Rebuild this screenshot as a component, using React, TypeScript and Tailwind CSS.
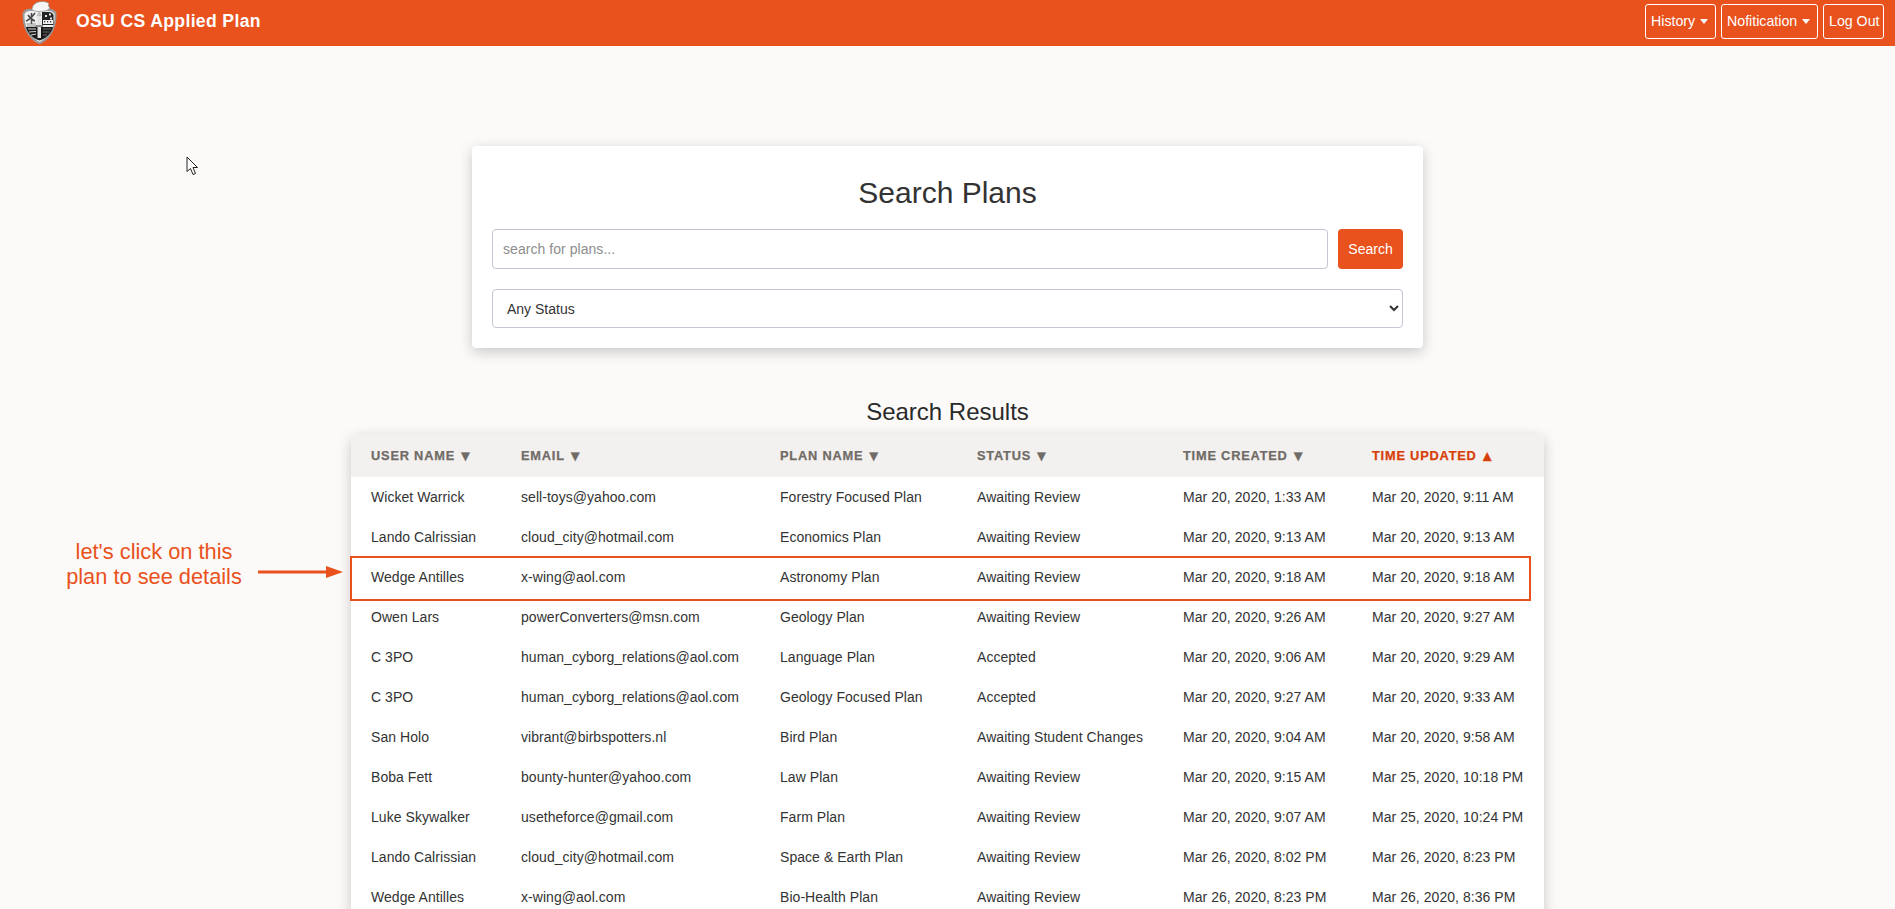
const rows = [
  ["Wicket Warrick", "sell-toys@yahoo.com", "Forestry Focused Plan", "Awaiting Review", "Mar 20, 2020, 1:33 AM", "Mar 20, 2020, 9:11 AM"],
  ["Lando Calrissian", "cloud_city@hotmail.com", "Economics Plan", "Awaiting Review", "Mar 20, 2020, 9:13 AM", "Mar 20, 2020, 9:13 AM"],
  ["Wedge Antilles", "x-wing@aol.com", "Astronomy Plan", "Awaiting Review", "Mar 20, 2020, 9:18 AM", "Mar 20, 2020, 9:18 AM"],
  ["Owen Lars", "powerConverters@msn.com", "Geology Plan", "Awaiting Review", "Mar 20, 2020, 9:26 AM", "Mar 20, 2020, 9:27 AM"],
  ["C 3PO", "human_cyborg_relations@aol.com", "Language Plan", "Accepted", "Mar 20, 2020, 9:06 AM", "Mar 20, 2020, 9:29 AM"],
  ["C 3PO", "human_cyborg_relations@aol.com", "Geology Focused Plan", "Accepted", "Mar 20, 2020, 9:27 AM", "Mar 20, 2020, 9:33 AM"],
  ["San Holo", "vibrant@birbspotters.nl", "Bird Plan", "Awaiting Student Changes", "Mar 20, 2020, 9:04 AM", "Mar 20, 2020, 9:58 AM"],
  ["Boba Fett", "bounty-hunter@yahoo.com", "Law Plan", "Awaiting Review", "Mar 20, 2020, 9:15 AM", "Mar 25, 2020, 10:18 PM"],
  ["Luke Skywalker", "usetheforce@gmail.com", "Farm Plan", "Awaiting Review", "Mar 20, 2020, 9:07 AM", "Mar 25, 2020, 10:24 PM"],
  ["Lando Calrissian", "cloud_city@hotmail.com", "Space & Earth Plan", "Awaiting Review", "Mar 26, 2020, 8:02 PM", "Mar 26, 2020, 8:23 PM"],
  ["Wedge Antilles", "x-wing@aol.com", "Bio-Health Plan", "Awaiting Review", "Mar 26, 2020, 8:23 PM", "Mar 26, 2020, 8:36 PM"],
];
const heads = ["User Name", "Email", "Plan Name", "Status", "Time Created"];

function Crest() {
  return (
    <svg width="35" height="44" viewBox="0 0 35 44" className="shrink-0">
      <path d="M0.5 12 C2 9 5 7 9 8 L17.5 6 L26 8 C30 7 33 9 34.5 12 C35 24 31 37 17.5 43.5 C4 37 0 24 0.5 12 Z" fill="#9a9a9a" />
      <path d="M2.5 13 C4 10.5 6 9.5 9 10 L17.5 8.5 L26 10 C29 9.5 31 10.5 32.5 13 C33 24 29 35 17.5 41 C6 35 2 24 2.5 13 Z" fill="#f0f0f0" />
      <path d="M20 11 L26 11 C29 10.5 31 12 31.5 14 L31.5 24 L20 24 Z" fill="#222" />
      <path d="M4 26 H31 C29.5 32 25 37 17.5 39.5 C10 37 5.5 32 4 26 Z" fill="#191919" />
      <path d="M4 20 C7 19 10 16 13 12 M6 14 C8 17 10 19 13 20 M9.5 12 L9.5 23" stroke="#4a4a4a" strokeWidth="1.5" fill="none" />
      <path d="M4.5 23 H14 M5 25 H14" stroke="#7a7a7a" strokeWidth="0.8" />
      <path d="M6 28 L14 28 M7 31 L14 30.5 M9 34 L14 33" stroke="#d8d8d8" strokeWidth="1" />
      <path d="M21 28 H29 M21 31 H27.5 M21 34 H25" stroke="#6a6a6a" strokeWidth="1" />
      <rect x="15.5" y="12" width="3.5" height="25" fill="#e2e2e2" />
      <path d="M14.5 15 L17.2 10 L20 15 Z" fill="#bdbdbd" />
      <rect x="13.5" y="24" width="7.5" height="2" fill="#8a8a8a" />
      <rect x="21" y="19" width="10" height="4" fill="#f2f2f2" />
      <rect x="22" y="20" width="1.2" height="1.4" fill="#333" />
      <rect x="25" y="20" width="1.2" height="1.4" fill="#333" />
      <rect x="28" y="20" width="1.2" height="1.4" fill="#333" />
      <rect x="23" y="14" width="2" height="2" fill="#e8e8e8" />
      <rect x="27" y="12.5" width="2" height="2" fill="#e8e8e8" />
      <rect x="28" y="16.5" width="2" height="2" fill="#e8e8e8" />
      <path d="M10 9 C10 4 14 0.5 20 0.5 C23 0.5 25 1 27 2.5 L26.5 5 L28 7 L25 9.5 C20 11 14 11 10 9 Z" fill="#f6f6f6" stroke="#8a8a8a" strokeWidth="0.7" />
    </svg>
  );
}

function NavBtn({ label, caret, width }: { label: string; caret?: boolean; width: string }) {
  return (
    <button className={`h-[35px] flex items-center gap-[5px] pl-[5px] border border-white rounded-[3px] text-white text-[14.2px] leading-none ${width}`}>
      {label}
      {caret && <span className="w-0 h-0 border-x-[4.5px] border-x-transparent border-t-[5px] border-t-white" />}
    </button>
  );
}

function SortHead({ label, mark, color }: { label: string; mark: string; color: string }) {
  return (
    <span className={`flex items-center gap-[3px] text-[12.8px] font-bold uppercase tracking-[0.8px] whitespace-nowrap [-webkit-text-stroke:0.25px] ${color}`}>
      {label}
      <span className="text-[15px] leading-none tracking-normal">{mark}</span>
    </span>
  );
}

export default function App() {
  return (
    <div className="relative h-screen overflow-hidden bg-[#fbfaf8] text-[#333] font-['Liberation_Sans',Arial,sans-serif]">
      <header className="h-[46px] bg-[#e9511d] flex items-center pl-[22px] pr-[11px]">
        <Crest />
        <span className="ml-[19px] text-white font-bold text-[17.6px] tracking-[0.35px] mb-[4px]">OSU CS Applied Plan</span>
        <div className="ml-auto flex gap-[5px] mb-[3px]">
          <NavBtn label="History" caret width="w-[71px]" />
          <NavBtn label="Nofitication" caret width="w-[97px]" />
          <NavBtn label="Log Out" width="w-[61px]" />
        </div>
      </header>

      <main className="flex flex-col items-center">
        <section className="mt-[100px] w-[951px] h-[202px] bg-white rounded-[4px] shadow-[0_4px_14px_rgba(0,0,0,0.2)] px-[20px]">
          <h1 className="mt-[21px] h-[50px] text-center text-[30px] leading-[50px] text-[#333] pt-[1px] mb-[12px]">Search Plans</h1>
          <div className="flex gap-[10px]">
            <input placeholder="search for plans..." className="flex-1 h-[40px] border border-[#c5c6d4] rounded-[4px] px-[10px] text-[14px] tracking-[0.05px] bg-white placeholder:text-[#8e8e8e]" />
            <button className="w-[65px] h-[40px] rounded-[4px] bg-[#e9511d] text-white text-[14px]">Search</button>
          </div>
          <select className="mt-[20px] w-full h-[39px] border border-[#c5c6d4] rounded-[4px] px-[10px] text-[14px] text-[#333] bg-white">
            <option>Any Status</option>
          </select>
        </section>

        <h2 className="mt-[49px] mb-[8px] text-[24px] leading-[29px] text-[#2a2a2a]">Search Results</h2>

        <div className="w-[1193px] bg-white rounded-t-[6px] shadow-[0_4px_14px_rgba(0,0,0,0.2)]">
          <table className="w-full table-fixed border-collapse text-left">
            <colgroup>
              <col className="w-[150px]" />
              <col className="w-[259px]" />
              <col className="w-[197px]" />
              <col className="w-[206px]" />
              <col className="w-[189px]" />
              <col className="w-[192px]" />
            </colgroup>
            <thead>
              <tr className="h-[43px] bg-[#f3f1ef]">
                {heads.map((h, i) => (
                  <th key={i} className={`pl-[20px] ${i === 0 ? "rounded-tl-[6px]" : ""}`}>
                    <SortHead label={h} mark="▼" color="text-[#706b66]" />
                  </th>
                ))}
                <th className="pl-[20px] rounded-tr-[6px]">
                  <SortHead label="Time Updated" mark="▲" color="text-[#d73f09]" />
                </th>
              </tr>
            </thead>
            <tbody>
              {rows.map((r, i) => (
                <tr key={i} className="h-[40px]">
                  {r.map((c, j) => (
                    <td key={j} className="pl-[20px] text-[14px] tracking-[0.05px] text-[#333] whitespace-nowrap">{c}</td>
                  ))}
                </tr>
              ))}
            </tbody>
          </table>
        </div>
      </main>

      {/* annotation overlays */}
      <div className="absolute left-[350px] top-[556px] w-[1181px] h-[45px] border-2 border-[#e9511d]" />
      <div className="absolute left-[44px] top-[539px] w-[220px] text-center text-[21.8px] leading-[25px] text-[#e9511d]">
        let's click on this<br />plan to see details
      </div>
      <svg className="absolute left-[258px] top-[564px]" width="86" height="16" viewBox="0 0 86 16">
        <path d="M0 8 H70" stroke="#e9511d" strokeWidth="3" />
        <path d="M68 2 L85 8 L68 14 Z" fill="#e9511d" />
      </svg>
      <svg className="absolute left-[186px] top-[156px]" width="13" height="20" viewBox="0 0 13 20">
        <path d="M1 1 V15.5 L4.5 12.5 L7 18.5 L9.5 17.5 L7 11.5 H11.5 Z" fill="#fff" stroke="#222" strokeWidth="1" />
      </svg>
    </div>
  );
}
